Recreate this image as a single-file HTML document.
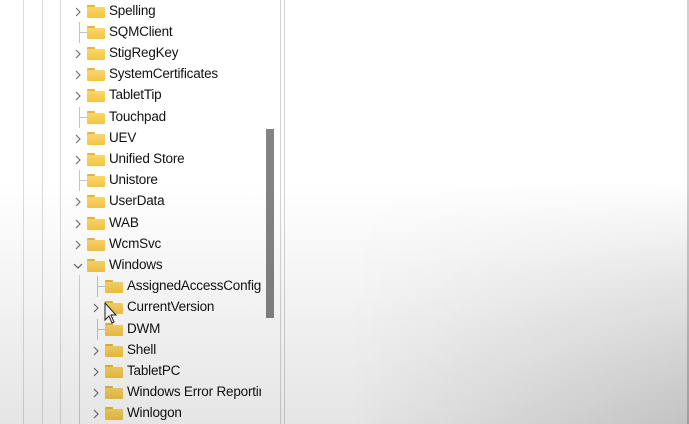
<!DOCTYPE html>
<html><head><style>
html,body{margin:0;padding:0;width:689px;height:424px;overflow:hidden;background:#fff;font-family:"Liberation Sans",sans-serif;}
#wrap{position:relative;width:689px;height:424px;}
.left{position:absolute;left:0;top:0;width:261px;height:424px;overflow:hidden;}
.g{position:absolute;top:0;width:1px;height:424px;background:#dcdcdc;}
.row{position:absolute;height:21px;left:0;width:400px;}
.t{position:absolute;top:2px;font-size:13.5px;color:#111;white-space:nowrap;letter-spacing:-0.2px;}
.f{position:absolute;top:4px;width:18px;height:13px;}
.f:before{content:"";position:absolute;left:0;top:0;width:8px;height:3px;background:#e8b730;border-radius:1px 1px 0 0;}
.f:after{content:"";position:absolute;left:0;top:2px;width:18px;height:11px;background:linear-gradient(#fbd66a,#f4c443);border-radius:1px;}
.ch{position:absolute;top:6px;}
.cn{position:absolute;top:10px;height:1px;width:7px;background:#c4c4c4;}
.overlay{position:absolute;left:0;top:0;width:689px;height:424px;pointer-events:none;
background:linear-gradient(to bottom,rgba(0,0,0,0) 0px,rgba(0,0,0,0) 180px,rgba(0,0,0,0.10) 424px);}
.overlay2{position:absolute;left:0;top:0;width:689px;height:424px;pointer-events:none;
background:linear-gradient(to right,rgba(0,0,0,0) 350px,rgba(0,0,0,0.15) 689px);
-webkit-mask:linear-gradient(to bottom,transparent 180px,#000 424px);mask:linear-gradient(to bottom,transparent 180px,#000 424px);}
</style></head><body><div id="wrap">
<div class="g" style="left:23px"></div>
<div class="g" style="left:42px"></div>
<div class="g" style="left:60px"></div>
<div class="g" style="left:79px;top:275px;height:149px;background:#d0d0d0"></div>
<div class="left" id="L"></div>
<div style="position:absolute;left:266px;top:129px;width:8px;height:189px;background:#838383;"></div>
<div style="position:absolute;left:280px;top:0;width:1px;height:424px;background:#d4d4d4"></div>
<div style="position:absolute;left:284px;top:0;width:1px;height:424px;background:#d4d4d4"></div>
<div style="position:absolute;left:687px;top:0;width:2px;height:424px;background:#cfcfcf"></div>
<svg style="position:absolute;left:104px;top:302px" width="16" height="24" viewBox="0 0 16 24"><path d="M1 1 L1 18 L5 14 L8 21 L10 20 L7 13 L12 13 Z" fill="#fff" stroke="#222" stroke-width="1"/></svg>
<div class="overlay"></div><div class="overlay2"></div>
</div>
<script>
var items=[["Spelling",1,">"],["SQMClient",1,"-"],["StigRegKey",1,">"],["SystemCertificates",1,">"],["TabletTip",1,">"],["Touchpad",1,"-"],["UEV",1,">"],["Unified Store",1,">"],["Unistore",1,"-"],["UserData",1,">"],["WAB",1,">"],["WcmSvc",1,">"],["Windows",1,"v"],["AssignedAccessConfiguration",2,"-"],["CurrentVersion",2,">"],["DWM",2,"-"],["Shell",2,">"],["TabletPC",2,">"],["Windows Error Reporting",2,">"],["Winlogon",2,">"]];
var L=document.getElementById('L'),h='';
items.forEach(function(it,i){
 var y=0.5+i*21.2, off=it[1]==1?0:18;
 h+='<div class="row" style="top:'+y+'px">';
 if(it[2]==">")h+='<svg class="ch" style="left:'+(75+off)+'px" width="6" height="10" viewBox="0 0 6 10"><path d="M1 1 L5 5 L1 9" fill="none" stroke="#707070" stroke-width="1.2"/></svg>';
 else if(it[2]=="v")h+='<svg class="ch" style="left:'+(73+off)+'px;top:8px" width="10" height="6" viewBox="0 0 10 6"><path d="M1 1 L5 5 L9 1" fill="none" stroke="#606060" stroke-width="1.2"/></svg>';
 else h+='<div class="cn" style="left:'+(80+off)+'px"></div><div class="g" style="left:'+(79+off)+'px;top:0;height:21px;background:#c4c4c4"></div>';
 h+='<div class="f" style="left:'+(87+off)+'px"></div><span class="t" style="left:'+(109+off)+'px">'+it[0]+'</span></div>';
});
L.innerHTML=h;
</script>
</body></html>
